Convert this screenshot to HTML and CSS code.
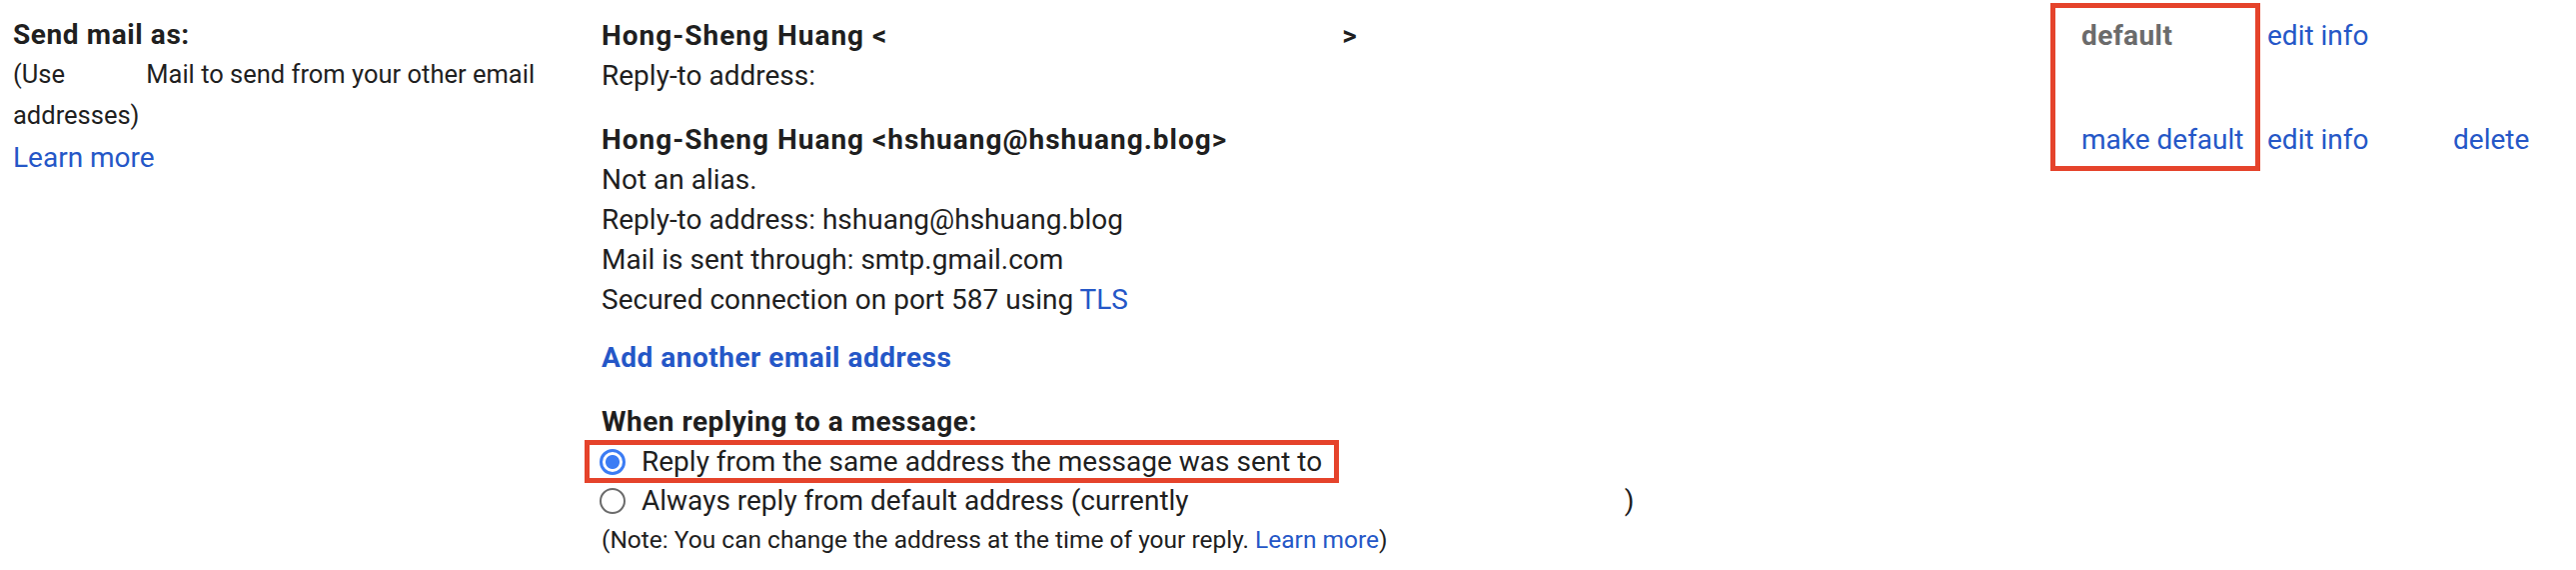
FILE: index.html
```html
<!DOCTYPE html>
<html lang="en">
<head>
  <meta charset="UTF-8" />
  <title>Settings - Accounts</title>
  <link rel="stylesheet" href="styles.css">
</head>
<body>
  <div class="settings-row">
    <div class="label-col">
      <div class="label-title">Send mail as:</div>
      <div class="label-help">(Use <span class="redact redact-short"></span>Mail to send from your other email addresses)</div>
      <a class="link" href="#">Learn more</a>
    </div>

    <div class="content-col">
      <div class="accounts">
        <div class="addr addr-1">
          <div class="addr-name">Hong-Sheng Huang &lt;<span class="redact redact-long"></span>&gt;</div>
          <div>Reply-to address: <span class="redact"></span></div>
        </div>
        <div class="state state-1 muted">default</div>
        <div class="edit edit-1"><a class="link" href="#">edit info</a></div>
        <div class="del del-1"></div>

        <div class="addr addr-2">
          <div class="addr-name">Hong-Sheng Huang &lt;hshuang@hshuang.blog&gt;</div>
          <div>Not an alias.</div>
          <div>Reply-to address: hshuang@hshuang.blog</div>
          <div>Mail is sent through: smtp.gmail.com</div>
          <div>Secured connection on port 587 using <a class="link" href="#">TLS</a></div>
        </div>
        <div class="state state-2"><a class="link" href="#">make default</a></div>
        <div class="edit edit-2"><a class="link" href="#">edit info</a></div>
        <div class="del del-2"><a class="link" href="#">delete</a></div>
      </div>

      <a class="link add-link" href="#">Add another email address</a>

      <div class="reply-title">When replying to a message:</div>
      <label class="radio-row highlight">
        <span class="radio checked"></span>
        Reply from the same address the message was sent to
      </label>
      <label class="radio-row">
        <span class="radio"></span>
        Always reply from default address (currently<span class="redact redact-current"></span>)
      </label>
      <div class="note">(Note: You can change the address at the time of your reply. <a class="link" href="#">Learn more</a>)</div>
    </div>
  </div>
</body>
</html>
```

FILE: styles.css
```css
body {
  margin: 0;
  background: white;
  font-family: Roboto, "Noto Sans", Arial, sans-serif;
  color: #1f1f1f;
  font-size: 28px;
}
.link {
  color: #2557c7;
  text-decoration: none;
}
.settings-row {
  display: flex;
  padding-top: 3px;
}
.label-col {
  width: 589px;
  padding: 13px 0 0 13px;
  flex-shrink: 0;
}
.label-title {
  font-weight: bold;
  line-height: 38px;
  letter-spacing: 0.6px;
}
.label-help {
  font-size: 25.5px;
  line-height: 41px;
  width: 570px;
}
.label-col .link {
  display: block;
  line-height: 44px;
}
.redact {
  display: inline-block;
  width: 260px;
}
.redact-short {
  width: 75px;
}
.redact-long {
  width: 455px;
}
.redact-current {
  width: 404px;
}
.content-col {
  flex: 1;
}
.accounts {
  display: grid;
  grid-template-columns: 1450px 210px 193px 1fr;
  line-height: 40px;
}
.addr { grid-column: 1; }
.state { grid-column: 2; }
.edit { grid-column: 3; }
.del { grid-column: 4; }
.addr-1, .state-1, .edit-1, .del-1 { grid-row: 1; }
.addr-2, .state-2, .edit-2, .del-2 { grid-row: 2; }
.addr-1, .edit-1 {
  padding-top: 13px;
  padding-bottom: 24px;
}
.addr-name {
  font-weight: bold;
  letter-spacing: 1px;
}
.state {
  padding-left: 26px;
  border: 5px solid #e5432b;
}
.state-1 {
  border-bottom: none;
  padding-top: 8px;
}
.state-2 {
  border-top: none;
  align-self: start;
  padding-bottom: 6px;
}
.muted {
  color: #6b6b6b;
  font-weight: bold;
  letter-spacing: 0.4px;
}
.edit {
  padding-left: 7px;
}
.add-link {
  display: block;
  margin-top: 18px;
  font-weight: bold;
  line-height: 40px;
  letter-spacing: 0.5px;
}
.reply-title {
  margin-top: 24px;
  font-weight: bold;
  line-height: 40px;
  letter-spacing: 0.5px;
}
.radio-row {
  display: flex;
  align-items: center;
  gap: 16px;
  line-height: 39px;
  width: fit-content;
  margin-left: -15px;
  padding: 0 15px 0 13px;
}
.radio-row.highlight {
  outline: 5px solid #e5432b;
  outline-offset: -3px;
}
.radio {
  width: 26px;
  height: 26px;
  border-radius: 50%;
  border: 2px solid #6b6b6b;
  box-sizing: border-box;
  flex-shrink: 0;
}
.radio.checked {
  border: 3px solid #3b7cf4;
  background: radial-gradient(circle, #3b7cf4 0 6.5px, white 7.5px);
}
.note {
  font-size: 24.5px;
  line-height: 40px;
}
```
